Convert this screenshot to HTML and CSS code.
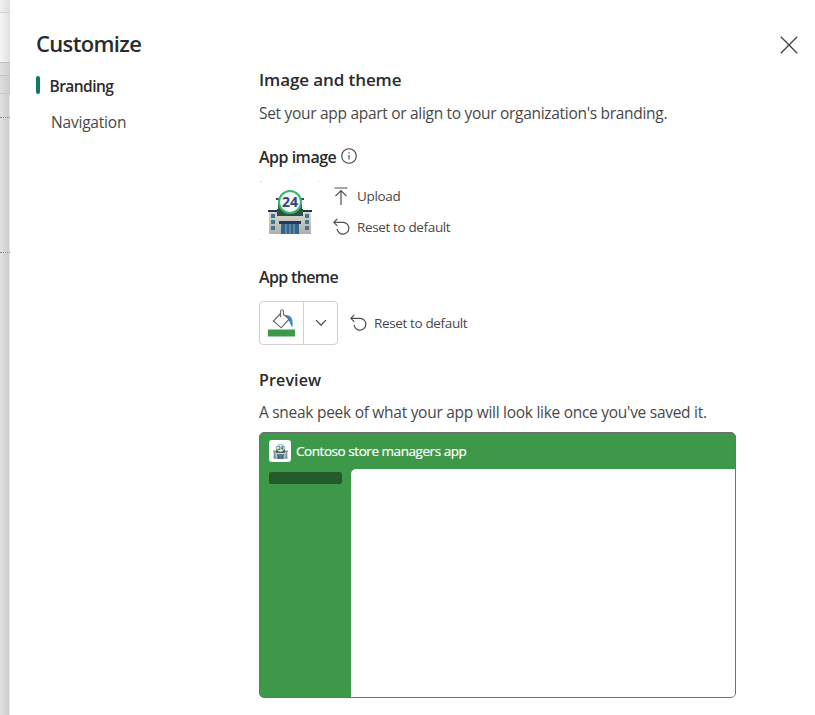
FILE: index.html
```html
<!DOCTYPE html>
<html lang="en">
<head>
<meta charset="utf-8">
<title>Customize</title>
<link rel="stylesheet" href="styles.css">
</head>
<body>
<div class="screen">
  <div class="backdrop"><div class="top"></div><div class="bar"></div><div class="gap"></div><div class="tab"></div><div class="area"></div><div class="canvas"></div></div>
  <main class="panel">
    <header class="head">
      <h1 class="title">Customize</h1>
      <svg class="close" viewBox="0 0 18 18"><path d="m.8.8 16.4 16.4M17.2.8.8 17.2"/></svg>
    </header>
    <div class="body">
      <nav class="nav">
        <div class="item active"><span class="mark"></span><span class="t-brand">Branding</span></div>
        <div class="item other"><span>Navigation</span></div>
      </nav>
      <section class="content">
        <h2 class="h-main">Image and theme</h2>
        <p class="desc">Set your app apart or align to your organization's branding.</p>
        <h3 class="h-image"><span>App image</span>
          <svg class="info" viewBox="0 0 16 16"><circle cx="8" cy="8" r="7.3"/><path d="M8 7v4.5M8 4.2v1.3"/></svg>
        </h3>
        <div class="image-row">
          <div class="tile">
            <svg class="store" viewBox="0 0 44 44">
              <defs>
                <linearGradient id="wall" x2="0" y2="1"><stop stop-color="#d9d8cc"/><stop offset="1" stop-color="#aeb1ab"/></linearGradient>
              </defs>
              <g id="store">
                <path fill="#31446a" d="M8 8h28v2H8z"/>
                <path fill="#dfddd0" d="M10 10h24v12H10z"/>
                <path fill="#285a3c" d="M10 14h24v12H10z"/>
                <path fill="url(#wall)" d="M1 22h42v22H1z"/>
                <path fill="#24345e" d="M0 20h9v2H0zM35 20h9v2h-9z"/>
                <path fill="#2c5440" d="M9 19h26v7H9z"/>
                <path fill="#427494" d="M3 24h4v4H3zm0 6h4v4H3zm0 6h4v4H3zM37 24h4v4h-4zm0 6h4v4h-4zm0 6h4v4h-4z"/>
                <path fill="#263765" d="M11 31h22v3H11z"/>
                <path fill="#32648c" d="M13 34h18v10H13z"/>
                <path stroke="#8bacc0" d="M18 34v10M22 34v10M26 34v10" fill="none"/>
                <circle cx="22" cy="12" r="11" fill="#f3f7f5" stroke="#35b66c" stroke-width="2"/>
                <text x="22" y="16.8" text-anchor="middle" class="store-number">24</text>
              </g>
            </svg>
          </div>
          <div class="actions">
            <div class="action"><svg class="icon" viewBox="0 0 18 18"><path d="M1.5 1h13M8 18V4M2.5 9.2 8 3.7l5.5 5.5"/></svg><span class="upload">Upload</span></div>
            <div class="action"><svg class="icon" viewBox="0 0 18 18"><path d="M4.3.8.8 4.3l3.5 3.5M1 4.3h9.2a5.9 5.9 0 1 1-6.1 6.6"/></svg><span>Reset to default</span></div>
          </div>
        </div>
        <h3 class="h-theme">App theme</h3>
        <div class="theme-row">
          <div class="split">
            <div class="fill"><svg width="28" height="28" viewBox="0 0 28 28">
              <path d="M17 6c6-.5 8.500 3.500 7.500 12-2.800-1.500-1.500-5.500-5-7z" fill="#2f8fd4"/>
              <path d="M12.500 4.500 5.400 12l7.800 6.800 7.800-8.600-5.500-4.700V2.700c0-2.600-3-2.600-3 0v5.600" fill="#fafafa" stroke="#666" stroke-width="1.100"/>
              <path d="M0 20.500h27v7H0z" fill="#3e9849"/>
            </svg></div>
            <div class="drop"><svg width="12" height="8" viewBox="0 0 12 8"><path d="m1 1.200 5 5 5-5"/></svg></div>
          </div>
          <div class="action"><svg class="icon" viewBox="0 0 18 18"><path d="M4.300.8.8 4.300l3.500 3.500M1 4.300h9.200a5.900 5.900 0 1 1-6.100 6.600"/></svg><span>Reset to default</span></div>
        </div>
        <h3 class="h-preview">Preview</h3>
        <p class="peek">A sneak peek of what your app will look like once you've saved it.</p>
        <div class="preview">
          <div class="app-head"><div class="app-icon"><svg class="small-store" viewBox="0 0 44 44"><use href="#store"/></svg></div><span>Contoso store managers app</span></div>
          <div class="app-body"><div class="side"><div class="pill"></div></div><div class="page"></div></div>
        </div>
      </section>
    </div>
  </main>
</div>
</body>
</html>
```
FILE: styles.css
```css
* { box-sizing: border-box; }
body { margin: 0; background: #fff; color: #484848; font-family: "Open Sans", "Noto Sans", sans-serif; white-space: nowrap; overflow: hidden; }
h1, h2, h3, p { margin: 0; }
h1, h2, h3 { color: #2b2b2b; font-weight: 600; }
svg { display: block; flex: none; fill: none; }
.screen { display: flex; height: 715px; }
.backdrop { width: 10px; background: linear-gradient(90deg, #e2e2e2, #cecece 85%, #e6e6e6 90%); }
.top { height: 13px; border-bottom: 1px solid #d2d2d2; background: linear-gradient(90deg, #f1f1f1, #dedede); }
.bar { height: 50px; border-bottom: 1px solid #bebebe; background: linear-gradient(90deg, #f5f5f5, #e0e0e0); }
.gap { height: 12px; background: linear-gradient(90deg, #e1e1e1, #cfcfcf); }
.tab { height: 19px; border: solid #c6c6c6; border-width: 1px 0; background: linear-gradient(90deg, #dedede, #cbcbcb); }
.area { height: 24px; border-bottom: 1px dotted #8c8c8c; }
.canvas { height: 135px; border-bottom: 1px dotted #8c8c8c; }
.panel { flex: 1; background: #fff; }
.head { display: flex; justify-content: space-between; height: 66px; padding: 27px 17.5px 0 26px; }
.title { font-size: 22px; line-height: 32px; letter-spacing: -.65px; }
.close { width: 18px; height: 18px; margin-top: 8.5px; stroke: #424242; stroke-width: 1.3; }
.body { display: flex; }
.nav { width: 249px; padding-left: 26px; }
.item { display: flex; align-items: center; height: 36px; font-size: 15.5px; }
.active { height: 40px; padding-bottom: 2px; color: #2b2b2b; font-weight: 600; }
.mark { width: 4px; height: 18px; margin-right: 9.5px; border-radius: 2px; background: #117865; }
.t-brand { padding-top: 2px; letter-spacing: -.55px; }
.other { height: 32px; padding-left: 15px; letter-spacing: -.2px; }
.content { width: 477px; }
.h-main { font-size: 17px; line-height: 28px; letter-spacing: -.1px; }
.desc, .peek { font-size: 15.5px; line-height: 24px; }
.desc { margin-top: 7px; letter-spacing: -.3px; }
.h-image { display: flex; align-items: center; gap: 5px; height: 24px; margin-top: 20px; font-size: 16px; letter-spacing: -.5px; }
.info { width: 16px; height: 16px; margin-top: -3px; stroke: #424242; stroke-width: 1.1; }
.image-row { display: flex; height: 63px; margin-top: 11px; }
.tile { display: grid; place-items: center; width: 62px; height: 62px; border-radius: 5px; background: linear-gradient(#fff, #fff) center / 62px 56px no-repeat border-box, linear-gradient(#fff, #fff) center / 56px 62px no-repeat border-box, linear-gradient(#fff, #fff) center / 59px 59px no-repeat border-box, #dce8e6 border-box; border: 1px solid transparent; }
.store { width: 44px; height: 44px; margin-top: 2px; }
.store-number { font: 700 14px "Open Sans", sans-serif; letter-spacing: 0; fill: #344475; }
.actions { padding-left: 12px; }
.action { display: flex; align-items: center; gap: 6px; height: 31px; font-size: 13.5px; letter-spacing: -.36px; }
.upload { letter-spacing: -.33px; }
.icon { width: 18px; height: 18px; stroke: #505050; stroke-width: 1.2; }
.h-theme { height: 24px; margin-top: 22px; font-size: 16px; line-height: 24px; letter-spacing: -.65px; }
.theme-row { display: flex; align-items: center; gap: 12px; height: 44px; margin-top: 12px; }
.split { display: flex; width: 79px; height: 44px; border: 1px solid #d1d1d1; border-radius: 4px; }
.fill { display: grid; place-items: center; width: 44px; padding-bottom: 1px; border-right: 1px solid #d1d1d1; }
.drop { display: grid; flex: 1; place-items: center; stroke: #424242; stroke-width: 1.2; }
.h-preview { height: 24px; margin-top: 23px; font-size: 16px; line-height: 24px; letter-spacing: .15px; }
.peek { margin-top: 8px; letter-spacing: -.28px; }
.preview { height: 266px; margin-top: 8px; border: 1px solid #707070; border-radius: 5px; background: #3e9849; overflow: hidden; }
.app-head { display: flex; align-items: center; gap: 5px; height: 36px; padding-left: 9px; color: #fff; font-size: 13.5px; font-weight: 500; letter-spacing: -.45px; -webkit-text-stroke: .2px #fff; }
.app-icon { display: grid; place-items: center; width: 22px; height: 22px; border-radius: 3px; background: #fff; }
.small-store { width: 15px; height: 15px; }
.app-body { display: flex; height: 228px; }
.side { width: 91px; padding: 3px 9px; }
.pill { height: 12px; border-radius: 2px; background: #255b2c; }
.page { flex: 1; border-top-left-radius: 5px; background: #fff; }
```
